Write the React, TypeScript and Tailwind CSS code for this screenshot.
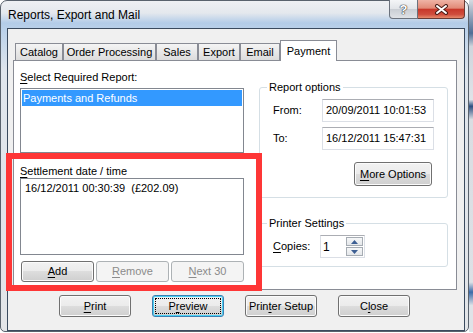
import type { ReactNode } from 'react';

const tabs = [
  { label: 'Catalog', w: 'w-[48px]' },
  { label: 'Order Processing', w: 'w-[93px]' },
  { label: 'Sales', w: 'w-[42px]' },
  { label: 'Export', w: 'w-[42px]' },
  { label: 'Email', w: 'w-[40px]' },
];

type BtnProps = {
  children: ReactNode;
  className?: string;
  disabled?: boolean;
  focused?: boolean;
};

const WinButton = ({ children, className = '', disabled, focused }: BtnProps) => {
  let look =
    'border-[#707070] bg-[linear-gradient(#f2f2f2_0%,#ebebeb_50%,#dddddd_50%,#cfcfcf_100%)] shadow-[inset_0_0_0_1px_#fbfbfb] text-black';
  if (disabled) look = 'border-[#adb2b5] bg-[#f4f4f4] text-[#8b8b8b]';
  if (focused)
    look =
      'border-[#3c7fb1] bg-[linear-gradient(#f2f2f2_0%,#ebebeb_50%,#dddddd_50%,#cfcfcf_100%)] shadow-[inset_0_0_0_1px_#48d0f5] text-black outline-1 outline-dotted outline-black outline-offset-[-4px]';
  return (
    <div className={`flex items-center justify-center rounded-[3px] border leading-none ${look} ${className}`}>
      <span>{children}</span>
    </div>
  );
};

const Ul = ({ children }: { children: ReactNode }) => <span className="underline underline-offset-[2px]">{children}</span>;

const TextBox = ({ value }: { value: string }) => (
  <div className="flex h-[23px] w-[112px] items-center border border-[#dbdfe6] border-t-[#abadb3] bg-white pl-[3px]">{value}</div>
);

const Arrow = ({ up }: { up?: boolean }) => (
  <svg width="7" height="4" viewBox="0 0 7 4">
    <path d={up ? 'M0 4 L3.5 0 L7 4 Z' : 'M0 0 L3.5 4 L7 0 Z'} fill="#3d5f93" />
  </svg>
);

const Window = () => (
  <div className="flex h-[332px] w-[469px] flex-col rounded-t-[7px] rounded-b-[5px] border border-[#59626d] bg-[linear-gradient(180deg,#eef0f3_0px,#e4e8ed_12px,#b3cce8_22px,#bcd2ea_30px,#dfe5ec_70px,#e3e5e8_100%)]">
    {/* title bar */}
    <div className="flex h-[27px] shrink-0 justify-between">
      <div className="self-center pl-[7px] text-[12px] text-black">Reports, Export and Mail</div>
      <div className="-mt-px mr-[3px] flex self-start">
        <div className="flex h-[19px] w-[29px] items-center justify-center rounded-bl-[4px] border border-t-0 border-[#6b727d] bg-[linear-gradient(#f4f5f7,#e1e4e8_50%,#c9cdd3_50%,#dfe2e6)]">
          <span className="text-[13px] font-bold leading-none text-white [text-shadow:0_0_1px_#333,0_0_1px_#333,0_0_1px_#333]">?</span>
        </div>
        <div className="flex h-[19px] w-[47px] items-center justify-center rounded-br-[4px] border border-t-0 border-l-0 border-[#6b3a33] bg-[linear-gradient(#efb4a6,#e28a77_45%,#c8382a_52%,#cf4d3c_80%,#e68a6c)]">
          <svg width="15" height="11" viewBox="0 0 15 11">
            <path d="M3 2 L12 9 M12 2 L3 9" stroke="#4a1c16" strokeWidth="4" strokeLinecap="round" />
            <path d="M3 2 L12 9 M12 2 L3 9" stroke="#ffffff" strokeWidth="2" strokeLinecap="round" />
          </svg>
        </div>
      </div>
    </div>

    {/* client area */}
    <div className="ml-[6px] mr-[3px] flex flex-1 flex-col border border-[#3a4a5e] bg-[#f0f0f0] pl-[5px] pt-[11px]">
      {/* tab strip */}
      <div className="flex h-[20px] w-[444px] items-end pl-[2px]">
        {tabs.map((t) => (
          <div
            key={t.label}
            className={`flex h-[17px] ${t.w} items-center justify-center border border-b-0 border-[#898c95] bg-[linear-gradient(#f4f4f4,#e8e8e8_50%,#dcdcdc)] leading-none`}
          >
            {t.label}
          </div>
        ))}
        <div className="relative z-10 -mb-px flex h-[21px] w-[57px] items-center justify-center border border-b-0 border-[#898c95] bg-white leading-none">
          Payment
        </div>
      </div>

      {/* tab page */}
      <div className="flex h-[230px] w-[444px] border border-[#898c95] bg-white pl-[6px]">
        {/* left column */}
        <div className="flex w-[224px] flex-col pt-[10px]">
          <div className="h-[13px] leading-[13px]">
            <Ul>S</Ul>elect Required Report:
          </div>
          <div className="mt-[4px] h-[65px] border border-[#828790] bg-white p-px">
            <div className="flex h-[16px] items-center bg-[#3399ff] pl-px text-white">Payments and Refunds</div>
          </div>
          <div className="mt-[12px] h-[13px] leading-[13px]">
            <Ul>S</Ul>ettlement date / time
          </div>
          <div className="h-[77px] border border-[#828790] bg-white p-px">
            <div className="flex h-[16px] items-center whitespace-pre pl-[3px]">16/12/2011 00:30:39  (£202.09)</div>
          </div>
          <div className="mt-[6px] flex gap-[2px] pl-px">
            <WinButton className="h-[21px] w-[73px]">
              <Ul>A</Ul>dd
            </WinButton>
            <WinButton className="h-[21px] w-[73px]" disabled>
              <Ul>R</Ul>emove
            </WinButton>
            <WinButton className="h-[21px] w-[73px]" disabled>
              <Ul>N</Ul>ext 30
            </WinButton>
          </div>
        </div>

        {/* right column */}
        <div className="ml-[15px] flex w-[189px] flex-col pt-[20px]">
          <fieldset className="rounded-[3px] border border-[#d5dfe5] pb-[11px]">
            <legend className="ml-[7px] px-[2px] leading-[13px]">Report options</legend>
            <div className="mt-[5px] flex items-center pl-[13px]">
              <span className="w-[49px]">From:</span>
              <TextBox value="20/09/2011 10:01:53" />
            </div>
            <div className="mt-[5px] flex items-center pl-[13px]">
              <span className="w-[49px]">To:</span>
              <TextBox value="16/12/2011 15:47:31" />
            </div>
            <div className="mt-[12px] flex justify-end pr-[15px]">
              <WinButton className="h-[24px] w-[78px]">
                <Ul>M</Ul>ore Options
              </WinButton>
            </div>
          </fieldset>

          <fieldset className="mt-[19px] rounded-[3px] border border-[#d5dfe5] pb-[8px]">
            <legend className="ml-[7px] px-[2px] leading-[13px]">Printer Settings</legend>
            <div className="mt-[5px] flex items-center pl-[13px]">
              <span className="w-[47px]">
                <Ul>C</Ul>opies:
              </span>
              <div className="flex h-[23px] w-[45px] border border-[#dbdfe6] border-t-[#abadb3] bg-white">
                <div className="flex flex-1 items-center pl-[2px] text-[12px]">1</div>
                <div className="my-px mr-px flex w-[17px] flex-col gap-px">
                  <div className="flex flex-1 items-center justify-center border border-[#a6acb3] bg-[linear-gradient(#f6f7f8,#e4e7ea)]">
                    <Arrow up />
                  </div>
                  <div className="flex flex-1 items-center justify-center border border-[#a6acb3] bg-[linear-gradient(#f6f7f8,#e4e7ea)]">
                    <Arrow />
                  </div>
                </div>
              </div>
            </div>
          </fieldset>
        </div>
      </div>

      {/* dialog buttons */}
      <div className="mt-[5px] flex gap-[21px] pl-[46px]">
        <WinButton className="h-[22px] w-[72px]">
          <Ul>P</Ul>rint
        </WinButton>
        <WinButton className="h-[22px] w-[72px]" focused>
          P<Ul>r</Ul>eview
        </WinButton>
        <WinButton className="h-[22px] w-[72px]">
          Prin<Ul>t</Ul>er Setup
        </WinButton>
        <WinButton className="h-[22px] w-[72px]">
          C<Ul>l</Ul>ose
        </WinButton>
      </div>
    </div>
  </div>
);

export default function App() {
  return (
    <div className="relative flex h-[333px] w-[473px] overflow-hidden bg-white font-['Liberation_Sans',Arial,sans-serif] text-[11px] text-black">
      <Window />
      <div className="h-[332px] flex-1 bg-[linear-gradient(180deg,#d6dbe1_0%,#4f6d95_10%,#cfd5dc_14%,#dfe3e8_30%,#2d4f80_32%,#d9dde2_36%,#dde1e6_85%,#3b6aa8_88%,#dfe3e8_92%)]" />
      {/* red annotation box */}
      <div className="pointer-events-none absolute left-[6px] top-[153px] h-[138px] w-[256px] border-[6px] border-[#fe3636]" />
    </div>
  );
}
